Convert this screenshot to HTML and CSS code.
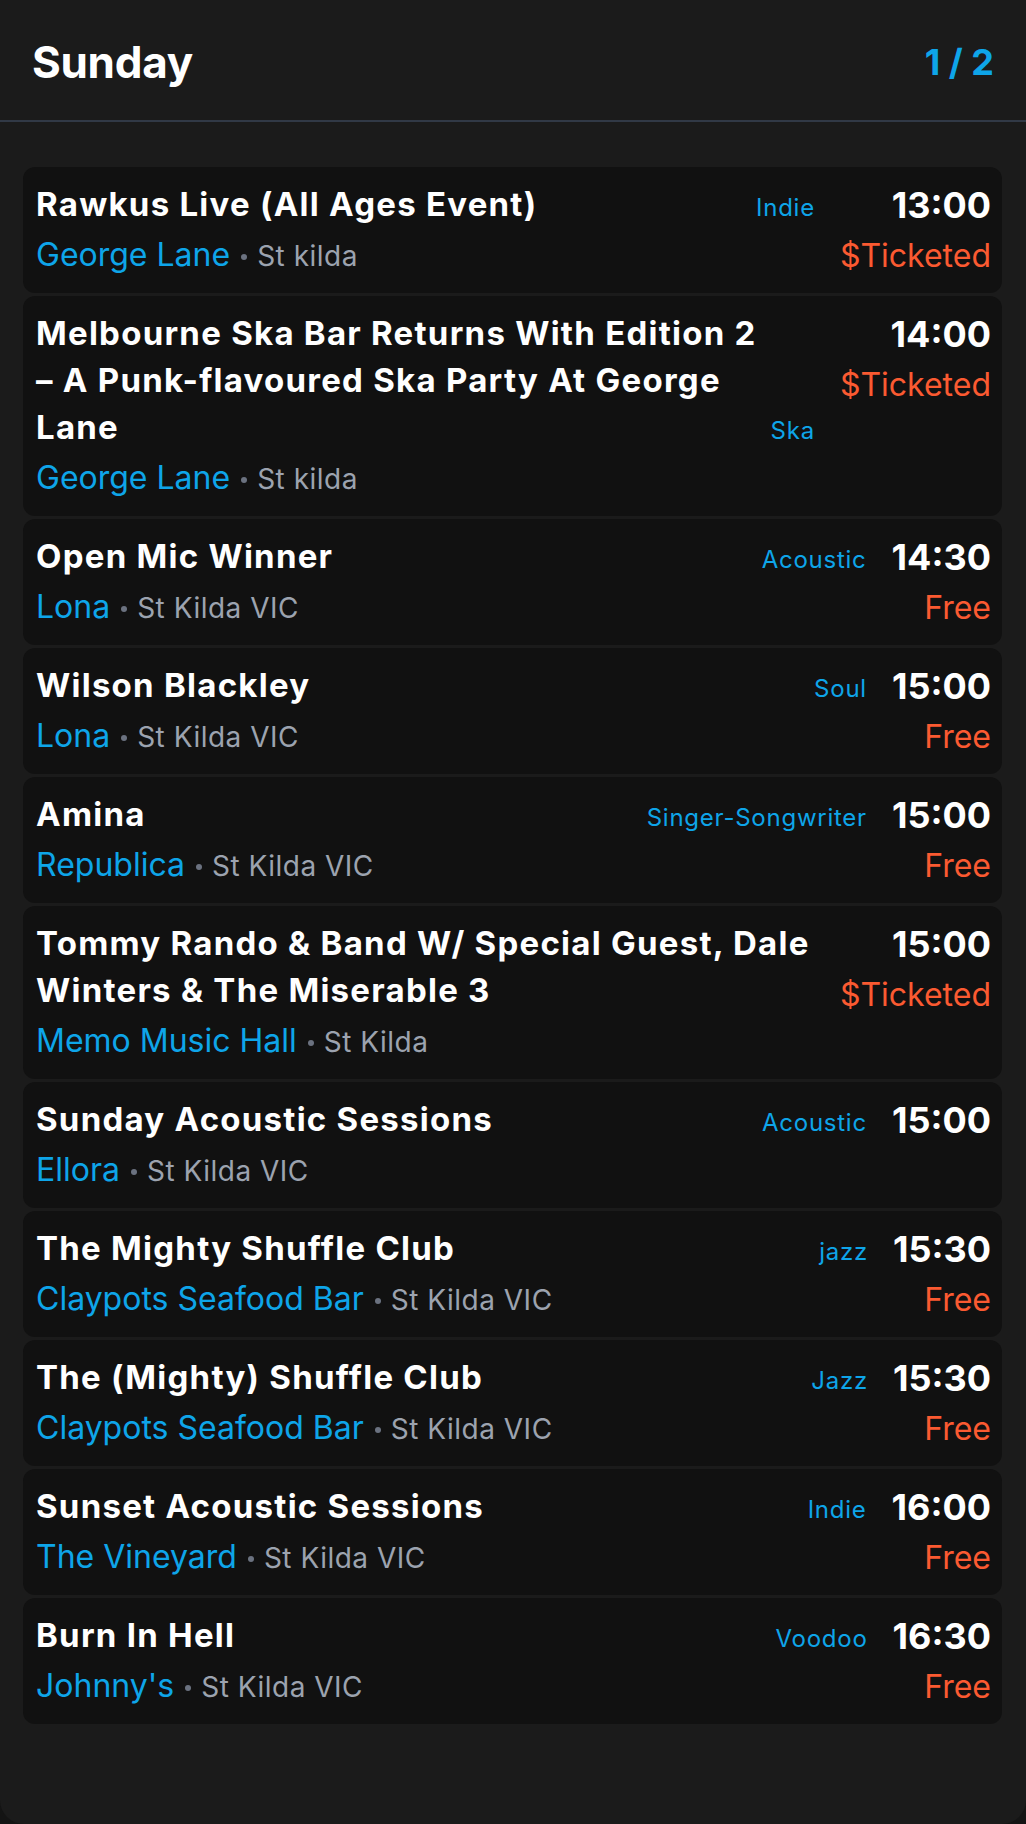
FILE: index.html
```html
<!DOCTYPE html>
<html lang="en">
<head>
<meta charset="utf-8">
<title>Sunday</title>
<link rel="stylesheet" href="styles.css">
</head>
<body>
<div class="panel">
  <header class="header">
    <h1 class="day">Sunday</h1>
    <div class="pager">1 / 2</div>
  </header>
  <main class="list">
    <article class="card">
      <div class="main">
        <div class="title-row"><h2 class="title">Rawkus Live (All Ages Event)</h2><span class="genre">Indie</span></div>
        <div class="venue"><span class="vname">George Lane</span><span class="dot"></span><span class="loc">St kilda</span></div>
      </div>
      <div class="side"><div class="time">13:00</div><div class="price">$Ticketed</div></div>
    </article>
    <article class="card">
      <div class="main">
        <div class="title-row"><h2 class="title">Melbourne Ska Bar Returns With Edition 2 – A Punk-flavoured Ska Party At George Lane</h2><span class="genre">Ska</span></div>
        <div class="venue"><span class="vname">George Lane</span><span class="dot"></span><span class="loc">St kilda</span></div>
      </div>
      <div class="side"><div class="time">14:00</div><div class="price">$Ticketed</div></div>
    </article>
    <article class="card">
      <div class="main">
        <div class="title-row"><h2 class="title">Open Mic Winner</h2><span class="genre">Acoustic</span></div>
        <div class="venue"><span class="vname">Lona</span><span class="dot"></span><span class="loc">St Kilda VIC</span></div>
      </div>
      <div class="side"><div class="time">14:30</div><div class="price">Free</div></div>
    </article>
    <article class="card">
      <div class="main">
        <div class="title-row"><h2 class="title">Wilson Blackley</h2><span class="genre">Soul</span></div>
        <div class="venue"><span class="vname">Lona</span><span class="dot"></span><span class="loc">St Kilda VIC</span></div>
      </div>
      <div class="side"><div class="time">15:00</div><div class="price">Free</div></div>
    </article>
    <article class="card">
      <div class="main">
        <div class="title-row"><h2 class="title">Amina</h2><span class="genre">Singer-Songwriter</span></div>
        <div class="venue"><span class="vname">Republica</span><span class="dot"></span><span class="loc">St Kilda VIC</span></div>
      </div>
      <div class="side"><div class="time">15:00</div><div class="price">Free</div></div>
    </article>
    <article class="card">
      <div class="main">
        <div class="title-row"><h2 class="title">Tommy Rando &amp; Band W/ Special Guest, Dale Winters &amp; The Miserable 3</h2></div>
        <div class="venue"><span class="vname">Memo Music Hall</span><span class="dot"></span><span class="loc">St Kilda</span></div>
      </div>
      <div class="side"><div class="time">15:00</div><div class="price">$Ticketed</div></div>
    </article>
    <article class="card">
      <div class="main">
        <div class="title-row"><h2 class="title">Sunday Acoustic Sessions</h2><span class="genre">Acoustic</span></div>
        <div class="venue"><span class="vname">Ellora</span><span class="dot"></span><span class="loc">St Kilda VIC</span></div>
      </div>
      <div class="side"><div class="time">15:00</div></div>
    </article>
    <article class="card">
      <div class="main">
        <div class="title-row"><h2 class="title">The Mighty Shuffle Club</h2><span class="genre">jazz</span></div>
        <div class="venue"><span class="vname">Claypots Seafood Bar</span><span class="dot"></span><span class="loc">St Kilda VIC</span></div>
      </div>
      <div class="side"><div class="time">15:30</div><div class="price">Free</div></div>
    </article>
    <article class="card">
      <div class="main">
        <div class="title-row"><h2 class="title">The (Mighty) Shuffle Club</h2><span class="genre">Jazz</span></div>
        <div class="venue"><span class="vname">Claypots Seafood Bar</span><span class="dot"></span><span class="loc">St Kilda VIC</span></div>
      </div>
      <div class="side"><div class="time">15:30</div><div class="price">Free</div></div>
    </article>
    <article class="card">
      <div class="main">
        <div class="title-row"><h2 class="title">Sunset Acoustic Sessions</h2><span class="genre">Indie</span></div>
        <div class="venue"><span class="vname">The Vineyard</span><span class="dot"></span><span class="loc">St Kilda VIC</span></div>
      </div>
      <div class="side"><div class="time">16:00</div><div class="price">Free</div></div>
    </article>
    <article class="card">
      <div class="main">
        <div class="title-row"><h2 class="title">Burn In Hell</h2><span class="genre">Voodoo</span></div>
        <div class="venue"><span class="vname">Johnny's</span><span class="dot"></span><span class="loc">St Kilda VIC</span></div>
      </div>
      <div class="side"><div class="time">16:30</div><div class="price">Free</div></div>
    </article>
  </main>
</div>
</body>
</html>
```

FILE: styles.css
```css
* { box-sizing: border-box; }
html, body { margin: 0; padding: 0; }
body {
  background: #141414;
  font-family: Inter, "Noto Sans", "Liberation Sans", sans-serif;
  color: #fff;
}
.panel {
  background: #1b1b1b;
  min-height: 1824px;
  border-radius: 0 0 24px 24px;
}
.header {
  height: 122px;
  padding: 4px 32px 0 32px;
  display: flex;
  align-items: center;
  justify-content: space-between;
  border-bottom: 2px solid #313946;
}
.day {
  margin: 0;
  font-size: 44px;
  font-weight: 700;
  line-height: 53px;
  letter-spacing: -0.3px;
}
.pager {
  font-size: 36px;
  font-weight: 700;
  color: #0ea5e9;
  line-height: 44px;
}
.list {
  padding: 45px 24px 0 23px;
  display: flex;
  flex-direction: column;
  gap: 3.5px;
}
.card {
  background: #111111;
  border-radius: 12px;
  padding: 14px 11px 15.5px 13px;
  display: flex;
  align-items: flex-start;
  gap: 25px;
}
.main {
  flex: 1;
  min-width: 0;
}
.title-row {
  display: flex;
  align-items: last baseline;
  gap: 4px;
}
.title {
  flex: 1;
  min-width: 0;
  margin: 0;
  font-size: 33px;
  font-weight: 700;
  line-height: 47px;
  letter-spacing: 1.25px;
  color: #fff;
}
.genre {
  font-size: 24px;
  line-height: 30px;
  letter-spacing: 0.75px;
  color: #0ea5e9;
  white-space: nowrap;
}
.venue {
  margin-top: 5px;
  height: 44px;
  display: flex;
  align-items: baseline;
  line-height: 44px;
}
.vname {
  font-size: 32px;
  line-height: 44px;
  color: #0ea5e9;
}
.dot {
  align-self: center;
  width: 6px;
  height: 6px;
  border-radius: 50%;
  background: #6b7280;
  margin: 4px 10px 0 11px;
}
.loc {
  font-size: 28px;
  line-height: 30px;
  letter-spacing: 0.5px;
  color: #9ca3af;
}
.side {
  display: flex;
  flex-direction: column;
  align-items: flex-end;
  white-space: nowrap;
}
.time {
  font-size: 36px;
  font-weight: 700;
  line-height: 48px;
  color: #fff;
}
.price {
  margin-top: 7px;
  font-size: 32px;
  line-height: 40px;
  color: #fb5a31;
}
```
